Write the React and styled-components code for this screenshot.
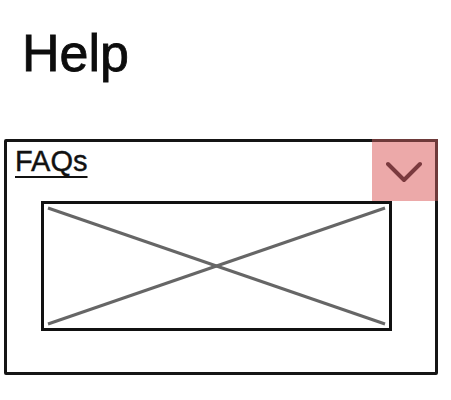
import React from "react";
import styled, { createGlobalStyle } from "styled-components";

const GlobalStyle = createGlobalStyle`
  body {
    margin: 0;
    background: #ffffff;
    font-family: "Liberation Sans", Arial, sans-serif;
    color: #111111;
  }
`;

const Page = styled.div`
  padding: 23px 0 0 4px;
`;

const Title = styled.h1`
  margin: 0 0 56px 18px;
  font-size: 52px;
  line-height: 60px;
  font-weight: 400;
  color: #0d0d0d;
  -webkit-text-stroke: 0.8px #0d0d0d;
`;

const Card = styled.section`
  box-sizing: border-box;
  width: 434px;
  height: 236px;
  border: 3px solid #151515;
  border-radius: 2px;
`;

const Header = styled.div`
  display: flex;
  justify-content: space-between;
  align-items: flex-start;
`;

const Link = styled.a`
  margin: 2px 0 0 8px;
  font-size: 29px;
  line-height: 34px;
  color: #111111;
  -webkit-text-stroke: 0.4px #111111;
  text-decoration: underline;
  text-decoration-thickness: 2px;
  text-underline-offset: 5px;
`;

const Toggle = styled.button`
  box-sizing: border-box;
  width: 66px;
  height: 62px;
  margin: -3px -3px 0 0;
  padding: 0;
  border: none;
  border-top: 3px solid #6e3a3a;
  border-right: 3px solid #6e3a3a;
  background: #eca9a9;
  display: flex;
  align-items: center;
  justify-content: center;
  cursor: pointer;
`;

const Placeholder = styled.div`
  box-sizing: border-box;
  width: 351px;
  height: 130px;
  margin-left: 34px;
  border: 3px solid #111111;

  svg {
    display: block;
    width: 100%;
    height: 100%;
  }
`;

export default function App() {
  return (
    <>
      <GlobalStyle />
      <Page>
        <Title>Help</Title>
        <Card>
          <Header>
            <Link href="#faqs">FAQs</Link>
            <Toggle aria-label="Expand">
              <svg width="36" height="22" viewBox="0 0 36 22">
                <polyline
                  points="2,3 18,19 34,3"
                  fill="none"
                  stroke="#7a3a3e"
                  strokeWidth="4"
                  strokeLinecap="round"
                  strokeLinejoin="round"
                />
              </svg>
            </Toggle>
          </Header>
          <Placeholder>
            <svg viewBox="0 0 345 124" preserveAspectRatio="none">
              <line x1="4" y1="4" x2="341" y2="120" stroke="#666" strokeWidth="3" />
              <line x1="4" y1="120" x2="341" y2="4" stroke="#666" strokeWidth="3" />
            </svg>
          </Placeholder>
        </Card>
      </Page>
    </>
  );
}
